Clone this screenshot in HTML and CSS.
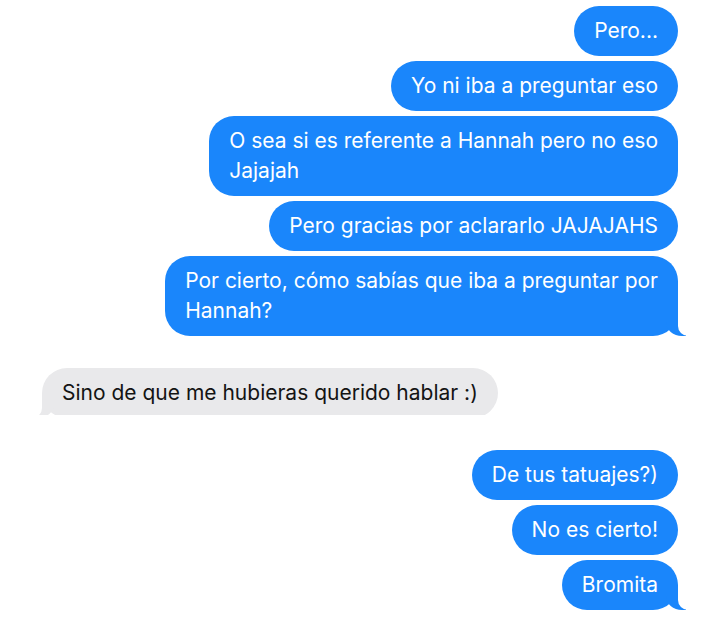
FILE: index.html
```html
<!DOCTYPE html>
<html>
<head>
  <title>Mensajes</title>
  <link rel="stylesheet" href="styles.css">
</head>
<body>
  <!-- Conversation -->
  <div class="thread">
    <div class="group">
      <div class="bubble sent">Pero...</div>
      <div class="bubble sent">Yo ni iba a preguntar eso</div>
      <div class="bubble sent">O sea si es referente a Hannah pero no eso<br>Jajajah</div>
      <div class="bubble sent">Pero gracias por aclararlo JAJAJAHS</div>
      <div class="bubble sent tail">Por cierto, cómo sabías que iba a preguntar por<br>Hannah?</div>
    </div>

    <div class="group">
      <div class="bubble received tail cut">Sino de que me hubieras querido hablar :)</div>
    </div>

    <div class="group">
      <div class="bubble sent">De tus tatuajes?)</div>
      <div class="bubble sent">No es cierto!</div>
      <div class="bubble sent tail">Bromita</div>
    </div>
  </div>
</body>
</html>
```

FILE: styles.css
```css
/* Page */
body {
  margin: 0;
  padding: 0;
  background: #ffffff;
  font-family: Inter, "Noto Sans", sans-serif;
}

/* Message list */
.thread {
  display: flex;
  flex-direction: column;
  gap: 32px;
  padding: 6px 42px 0 42px;
}

.group {
  display: flex;
  flex-direction: column;
  gap: 5px;
}

/* Bubbles */
.bubble {
  position: relative;
  max-width: 560px;
  padding: 10px 20px;
  font-size: 21px;
  line-height: 30px;
  border-radius: 25px;
}

.sent {
  align-self: flex-end;
  background: #1a86fb;
  color: #ffffff;
}

.received {
  align-self: flex-start;
  background: #e9e9eb;
  color: #141414;
}

/* screenshot crop at the bottom of the grey bubble */
.cut {
  clip-path: inset(0 -30px 3px -30px);
}

/* Tails */
.tail:before,
.tail:after {
  content: "";
  position: absolute;
  bottom: 0;
  height: 25px;
}

.sent.tail:before {
  right: -8px;
  width: 20px;
  background: #1a86fb;
  border-bottom-left-radius: 16px 14px;
}

.sent.tail:after {
  right: -26px;
  width: 26px;
  background: #ffffff;
  border-bottom-left-radius: 10px;
}

.received.tail:before {
  left: -8px;
  width: 20px;
  background: #e9e9eb;
  border-bottom-right-radius: 16px 14px;
}

.received.tail:after {
  left: -26px;
  width: 26px;
  background: #ffffff;
  border-bottom-right-radius: 10px;
}
```
